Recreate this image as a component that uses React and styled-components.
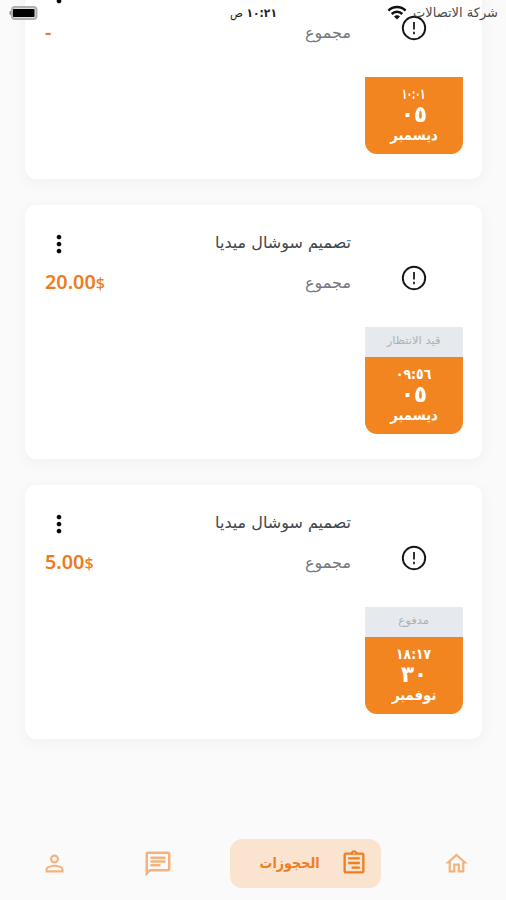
import React from 'react';
import styled, { createGlobalStyle } from 'styled-components';
import {
  MdOutlineHome,
  MdOutlineAssignment,
  MdOutlineChat,
  MdPersonOutline,
  MdMoreVert,
} from 'react-icons/md';

const GlobalStyle = createGlobalStyle`
  * { box-sizing: border-box; }
  body { margin: 0; background: #fafafa; }
`;

const Screen = styled.div`
  position: relative;
  display: flex;
  flex-direction: column;
  width: 506px;
  height: 900px;
  overflow: hidden;
  direction: rtl;
  background: #fafafa;
  font-family: 'DejaVu Sans', sans-serif;
`;

const StatusBar = styled.header`
  position: absolute;
  z-index: 2;
  top: 0;
  left: 0;
  display: grid;
  grid-template-columns: 1fr auto 1fr;
  align-items: center;
  width: 506px;
  height: 26px;
  padding: 0 8px;
  color: #222;
`;

const Carrier = styled.div`
  display: flex;
  align-items: center;
  gap: 6px;
  color: #4a4a4a;
`;

const WifiIcon = styled.svg`
  display: block;
  flex: none;
  margin-bottom: 1px;
`;

/* A single line of text, narrowed or widened about its anchor edge. */
const Line = styled.span`
  display: block;
  white-space: nowrap;
  font-size: ${(p) => p.$size}px;
  line-height: ${(p) => p.$height || 20}px;
  min-height: ${(p) => p.$height || 20}px;
  font-weight: ${(p) => p.$weight || 400};
  color: ${(p) => p.$color || 'inherit'};
  transform: scaleX(${(p) => p.$stretch || 1});
  transform-origin: ${(p) => p.$anchor || 'right'} center;
`;

const Meridiem = styled.span`
  font-weight: 400;
`;

const Battery = styled.svg`
  justify-self: end;
  display: block;
`;

const List = styled.main`
  display: flex;
  flex-direction: column;
  gap: 26px;
  flex: none;
  height: 824px;
  margin-top: -45px;
  padding: 0 24px 0 25px;
`;

const CardBox = styled.article`
  display: grid;
  grid-template-columns: 98px 1fr auto;
  column-gap: 14px;
  flex: none;
  padding: 25px 19px 25px 20px;
  border-radius: 11px;
  background: #fff;
  box-shadow: 0 3px 14px rgba(70, 80, 80, 0.055);
`;

const SideColumn = styled.div`
  display: flex;
  flex-direction: column;
  align-items: center;
  padding-top: 35px;
`;

const AlertSvg = styled.svg`
  flex: none;
  display: block;
  margin: 0 0 36px;
`;

const Badge = styled.div`
  width: 98px;
  height: 30px;
  display: flex;
  justify-content: center;
  padding-top: 4px;
  background: #e6e9ed;
`;

const DateBox = styled.div`
  width: 98px;
  height: 77px;
  display: flex;
  flex-direction: column;
  align-items: center;
  padding-top: 7px;
  border-radius: 0 0 12px 12px;
  background: #f28520;
  color: #fff;
`;

const Labels = styled.div`
  display: flex;
  flex-direction: column;
  gap: 20px;
  padding-top: 3px;
`;

const EndColumn = styled.div`
  display: flex;
  flex-direction: column;
  align-items: flex-start;
  direction: ltr;
`;

const MoreIcon = styled(MdMoreVert)`
  width: 28px;
  height: 28px;
  color: #080808;
`;

const Price = styled.div`
  display: flex;
  align-items: baseline;
  height: 24px;
  margin-top: 12px;
  font-family: 'Noto Sans', sans-serif;
  font-size: 19.8px;
  line-height: 24px;
  font-weight: 600;
  color: #ec7c21;
`;

const Currency = styled.span`
  font-size: 16px;
  font-weight: 500;
`;

const NavBar = styled.nav`
  display: flex;
  align-items: center;
  height: 49px;
  margin-top: 60px;
  padding-right: 36px;
  color: #f5b27c;
`;

const NavItem = styled.div`
  display: flex;
  flex: none;
  margin-left: ${(p) => p.$after || 0}px;
  svg {
    width: ${(p) => p.$size || 27}px;
    height: ${(p) => p.$size || 27}px;
  }
`;

const ActiveItem = styled.div`
  display: flex;
  flex: none;
  align-items: center;
  gap: 20px;
  width: 151px;
  height: 49px;
  margin-left: 57px;
  padding: 0 13px 2px;
  border-radius: 12px;
  background: #fae3cf;
  color: #ed7f22;
  svg { width: 28px; height: 28px; transform: scaleX(-1); }
`;

const bookings = [
  { time: '١٠:٠١', timeStretch: 0.56, day: '٠٥', month: 'ديسمبر' },
  {
    title: 'تصميم سوشال ميديا',
    status: 'قيد الانتظار',
    time: '٠٩:٥٦',
    timeStretch: 0.87,
    day: '٠٥',
    month: 'ديسمبر',
    price: '20.00',
  },
  {
    title: 'تصميم سوشال ميديا',
    status: 'مدفوع',
    time: '١٨:١٧',
    timeStretch: 0.85,
    day: '٣٠',
    month: 'نوفمبر',
    price: '5.00',
  },
];

function AlertIcon() {
  return (
    <AlertSvg width="26" height="26" viewBox="0 0 26 26" fill="none" stroke="#161616">
      <circle cx="13" cy="13" r="11.2" strokeWidth="1.9" />
      <path d="M13 7v7.4M13 16.8v2.4" strokeWidth="2" stroke="#333" />
    </AlertSvg>
  );
}

function BookingCard({ booking }) {
  return (
    <CardBox>
      <SideColumn>
        <AlertIcon />
        {booking.status && (
          <Badge>
            <Line $size={11} $color="#adb1b6" $stretch={1.05} $anchor="center">{booking.status}</Line>
          </Badge>
        )}
        <DateBox>
          <Line $size={14.5} $weight={700} $stretch={booking.timeStretch} $anchor="center">{booking.time}</Line>
          <Line $size={23} $weight={700} $height={21} $stretch={0.93} $anchor="center">{booking.day}</Line>
          <Line $size={15} $weight={700} $height={21} $stretch={0.88} $anchor="center">{booking.month}</Line>
        </DateBox>
      </SideColumn>
      <Labels>
        <Line $size={16} $color="#42454b">{booking.title}</Line>
        <Line $size={16} $color="#77797e">مجموع</Line>
      </Labels>
      <EndColumn>
        <MoreIcon />
        <Price>
          {booking.price || '-'}
          {booking.price && <Currency>$</Currency>}
        </Price>
      </EndColumn>
    </CardBox>
  );
}

export default function App() {
  return (
    <Screen>
      <GlobalStyle />
      <StatusBar>
        <Carrier>
          <Line $size={13}>شركة الاتصالات</Line>
          <WifiIcon width="20" height="15" viewBox="0 0 20 15" fill="none" stroke="#111" strokeWidth="2.5">
            <path d="M1.4 5.6a12.2 12.2 0 0 1 17.2 0" />
            <path d="M4.7 9a7.5 7.5 0 0 1 10.6 0" />
            <path d="M10 14.4l-3-3a4.2 4.2 0 0 1 6 0z" fill="#111" stroke="none" />
          </WifiIcon>
        </Carrier>
        <Line $size={12} $weight={700} $stretch={0.89} $anchor="center">١٠:٢١ <Meridiem>ص</Meridiem></Line>
        <Battery width="30" height="14" viewBox="0 0 30 14">
          <path d="M2.8 4.5a3 3 0 0 0 0 5z" fill="#777" />
          <rect x="4" y="1" width="24.5" height="12" rx="3" fill="#ddd" stroke="#b0b0b0" strokeWidth="2" />
          <rect x="5" y="3" width="21.5" height="8" rx="0.8" fill="#000" />
        </Battery>
      </StatusBar>
      <List>
        {bookings.map((booking, index) => (
          <BookingCard key={index} booking={booking} />
        ))}
      </List>
      <NavBar>
        <NavItem $after={62}><MdOutlineHome /></NavItem>
        <ActiveItem>
          <MdOutlineAssignment />
          <Line $size={15} $weight={700} $stretch={0.85}>الحجوزات</Line>
        </ActiveItem>
        <NavItem $size={30} $after={75}><MdOutlineChat /></NavItem>
        <NavItem><MdPersonOutline /></NavItem>
      </NavBar>
    </Screen>
  );
}
